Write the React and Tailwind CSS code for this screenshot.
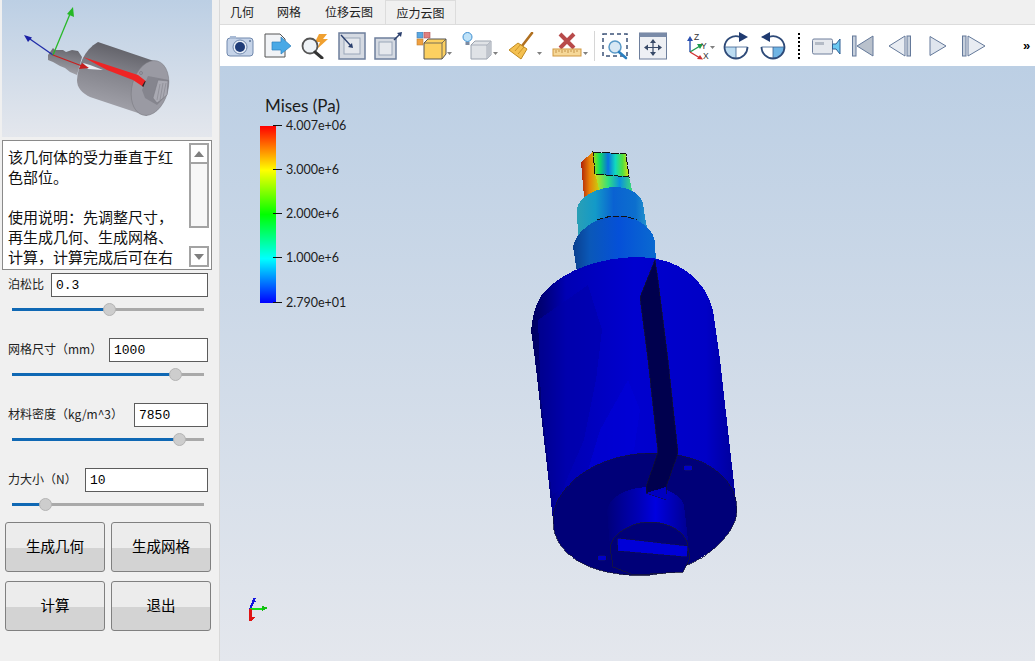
import React from "react";

const cjk = "font-['Noto_Sans_CJK_SC','Noto_Sans',sans-serif]";

const Slider = ({ value }) => (
  <div className="flex items-center ml-[12px] w-[192px] h-[14px]">
    <div className="h-[3px] bg-[#0f68b4]" style={{ width: value }} />
    <div className="w-[13px] h-[13px] shrink-0 -mx-[6px] z-10 rounded-full bg-[#cdcdcd] border border-[#b4b4b4]" />
    <div className="h-[3px] flex-1 bg-[#a9a9a9]" />
  </div>
);

const FormRow = ({ label, value, inputClass, sliderValue, className }) => (
  <div className={className}>
    <div className="flex items-center h-[24px] pl-[8px] pr-[11px]">
      <span className="text-[12px] text-[#222] flex-1 whitespace-nowrap pb-[2px]">{label}</span>
      <input
        readOnly
        value={value}
        className={`h-[24px] border border-[#5c5c5c] bg-white pl-[4px] text-[13px] text-black outline-none font-['Liberation_Mono',monospace] ${inputClass}`}
      />
    </div>
    <div className="mt-[5px]">
      <Slider value={sliderValue} />
    </div>
  </div>
);

const PanelButton = ({ children }) => (
  <button className="w-[100px] h-[50px] pb-[3px] rounded-[3px] border border-[#808080] bg-[linear-gradient(to_bottom,#ececec_0%,#ececec_52%,#d3d3d3_52%,#d3d3d3_100%)] text-[14.5px] text-black">
    {children}
  </button>
);

const ScrollButton = ({ up }) => (
  <div className="h-[21px] border-2 border-[#a3a3a3] bg-white flex items-center justify-center">
    <svg width="10" height="6" viewBox="0 0 10 6">
      <path d={up ? "M0 6 L5 0 L10 6 Z" : "M0 0 L10 0 L5 6 Z"} fill="#7f7f7f" />
    </svg>
  </div>
);

const Preview = () => (
  <svg viewBox="2 0 210 137" className="w-[210px] h-[137px] block">
    <defs>
      <linearGradient id="pvBody" x1="0.62" y1="0" x2="0.38" y2="1">
        <stop offset="0" stopColor="#5a5a61" />
        <stop offset="0.45" stopColor="#85858d" />
        <stop offset="1" stopColor="#a8a8b0" />
      </linearGradient>
      <linearGradient id="pvStep" x1="0.6" y1="0" x2="0.4" y2="1">
        <stop offset="0" stopColor="#66666d" />
        <stop offset="1" stopColor="#a4a4ac" />
      </linearGradient>
    </defs>
    <path d="M48 55 L53 48 L55 50 L63 50 L66 52 L72 50 L78 51 L82 57 L77 75 L70 72 L65 68 L60 66 L53 62 L48 60 Z" fill="url(#pvStep)" />
    <path d="M77 80 C78 66 84 50 98 42 L157 62 L147 116 L90 97 C82 93 77 88 77 80 Z" fill="url(#pvBody)" />
    <ellipse cx="150" cy="88" rx="18" ry="28" transform="rotate(15 150 88)" fill="#9a9aa3" stroke="#77777f" strokeWidth="0.5" />
    <path d="M83 63 L90 65 L103 70 L88 69 Z" fill="#e8edf4" />
    <path d="M83 57 L138 75 L147 82 L145 88 L133 80 L107 70 Z" fill="#ee2424" />
    <path d="M145 81 L147 82 L145 88 L142 86 Z" fill="#222" />
    <path d="M148 76 L169 80 L167 95 L157 105 L145 98 L142 90 Z" fill="#85858e" />
    <path d="M158 80 L168 81 L167 95 L157 103 L153 98 Z" fill="#a9a9b2" stroke="#77777f" strokeWidth="0.5" />
    <path d="M160 84 L157 100 M163 83 L160 100 M166 83 L163 98" stroke="#83838b" strokeWidth="0.6" />
    <circle cx="141" cy="73" r="1.5" fill="none" stroke="#6a6a72" strokeWidth="0.5" />
    <path d="M53 55 L27 37" stroke="#202ca8" strokeWidth="1.3" />
    <path d="M24 35 L32 37.5 L28 42 Z" fill="#1a1fa5" />
    <path d="M53 55 L70 14" stroke="#28b828" strokeWidth="1.3" />
    <path d="M73 7 L74 17 L67 14 Z" fill="#25b825" />
    <path d="M53 55 L82 66" stroke="#c81e1e" strokeWidth="1.3" />
    <path d="M89 68 L79 69 L82 63 Z" fill="#c81e1e" />
  </svg>
);

const Model = () => (
  <svg viewBox="220 66 815 595" shapeRendering="crispEdges" className="absolute inset-0 w-full h-full">
    <defs>
      <linearGradient id="bodyG" x1="0" y1="0" x2="1" y2="0">
        <stop offset="0" stopColor="#00005c" />
        <stop offset="0.07" stopColor="#00007e" />
        <stop offset="0.17" stopColor="#0000b4" />
        <stop offset="0.5" stopColor="#0000cf" />
        <stop offset="0.85" stopColor="#0000c6" />
        <stop offset="1" stopColor="#000098" />
      </linearGradient>
      <linearGradient id="cyl1" x1="0" y1="0" x2="1" y2="0">
        <stop offset="0" stopColor="#2a9fb5" />
        <stop offset="0.25" stopColor="#139ac8" />
        <stop offset="0.5" stopColor="#0a62d2" />
        <stop offset="0.8" stopColor="#0c6fce" />
        <stop offset="1" stopColor="#2a9ccb" />
      </linearGradient>
      <linearGradient id="cyl2" x1="0" y1="0" x2="1" y2="0">
        <stop offset="0" stopColor="#0a3f8e" />
        <stop offset="0.2" stopColor="#0a58b8" />
        <stop offset="0.55" stopColor="#0550d8" />
        <stop offset="1" stopColor="#0a6ad0" />
      </linearGradient>
      <linearGradient id="tipTop" x1="0" y1="0" x2="1" y2="0">
        <stop offset="0" stopColor="#9ee010" />
        <stop offset="0.18" stopColor="#10e060" />
        <stop offset="0.42" stopColor="#0a70e0" />
        <stop offset="0.62" stopColor="#10d8c0" />
        <stop offset="0.82" stopColor="#50e040" />
        <stop offset="1" stopColor="#e0e010" />
      </linearGradient>
      <linearGradient id="tipFront" x1="0" y1="0" x2="1" y2="0">
        <stop offset="0" stopColor="#d0e010" />
        <stop offset="0.35" stopColor="#30e080" />
        <stop offset="0.65" stopColor="#0a90e0" />
        <stop offset="1" stopColor="#40e070" />
      </linearGradient>
      <linearGradient id="tipLeft" x1="0" y1="0" x2="1" y2="0">
        <stop offset="0" stopColor="#b02008" />
        <stop offset="0.45" stopColor="#e88008" />
        <stop offset="1" stopColor="#c8d810" />
      </linearGradient>
      <linearGradient id="bossG" x1="0" y1="0" x2="1" y2="0">
        <stop offset="0" stopColor="#00007a" />
        <stop offset="0.4" stopColor="#0000b8" />
        <stop offset="0.6" stopColor="#0000e0" />
        <stop offset="1" stopColor="#000090" />
      </linearGradient>
    </defs>

    <path d="M581 162 L593 152 L600 190 L584 197 Z" fill="url(#tipLeft)" />
    <path d="M595 174 L629 177 L633 194 L617 189 L600 192 Z" fill="url(#tipFront)" />
    <path d="M593 152 L626 154 L629 177 L595 174 Z" fill="url(#tipTop)" stroke="#111" strokeWidth="1" strokeDasharray="8 1" />
    <path d="M577 208 C580 196 597 187 617 187 C632 188 642 196 643 204 L646 223 L650 240 L578 240 Z" fill="url(#cyl1)" />
    <path d="M573 247 C575 232 595 216 618 216 C640 217 655 230 655 244 L656 262 L577 272 Z" fill="url(#cyl2)" />
    <path d="M597 220 C605 217 612 216 618 216 C626 216 632 218 637 220" fill="none" stroke="#111" strokeWidth="1" strokeDasharray="6 2" />

    <path d="M531 330 C533 310 538 298 545 291 C565 270 600 257 640 257 C680 258 705 280 713 310 L720 360 L737 510 L553 520 L535 360 Z" fill="url(#bodyG)" />
    <path d="M588 285 L602 330 L596 380 L584 440 L563 488 L552 495 L541 400 L538 320 Z" fill="#0000a8" opacity="0.55" />
    <path d="M628 380 L640 410 L634 450 L612 465 L588 470 L600 430 Z" fill="#0000d8" opacity="0.6" />

    <path d="M553 520 C553 490 590 455 650 453 C700 452 737 475 737 510 C737 535 700 570 650 575 C600 578 553 560 553 520 Z" fill="#000078" stroke="#10103c" strokeWidth="0.8" />

    <path d="M607 510 C610 495 630 487 650 487 C668 487 682 497 684 505 L688 540 L610 547 Z" fill="url(#bossG)" />
    <path d="M610 547 C612 535 630 522 650 522 C672 522 688 535 688 548 L690 558 L683 572 L633 575 L613 567 Z" fill="#000078" stroke="#181838" strokeWidth="0.8" />
    <path d="M617 538 L688 546 L687 557 L618 551 Z" fill="#0000d8" stroke="#10103c" strokeWidth="0.6" />

    <path d="M655 260 L640 297 L648 360 L658 452 L646 487 L646 493 L667 500 L666 487 L678 453 L668 360 L658 280 Z" fill="#00004e" stroke="#12122c" strokeWidth="0.7" />
    <path d="M646 493 L666 487 L667 500 Z" fill="#0000c0" />

    <ellipse cx="688" cy="468" rx="4.5" ry="3" fill="#0000c8" stroke="#10103c" strokeWidth="0.6" />
    <ellipse cx="602" cy="558" rx="4.5" ry="3" fill="#0000c8" stroke="#10103c" strokeWidth="0.6" />

    {/* mini axes */}
    <path d="M250 609 L255 598" stroke="#1414e0" strokeWidth="2" />
    <path d="M250 609 L265 609" stroke="#14e014" strokeWidth="2" />
    <path d="M250.5 609 L250.5 621" stroke="#e01414" strokeWidth="2.5" />
    <path d="M254 597 L256 602 L252 601 Z" fill="#1414e0" />
    <path d="M262 606 L268 608 L262 611 Z" fill="#10c010" />
    <path d="M249 618 L255 617 L251 622 Z" fill="#e01414" />
  </svg>
);

const arrowDown = (x) => <path d={`M${x} 20 h5 l-2.5 3 Z`} fill="#808080" />;

const Toolbar = () => (
  <div className="h-[41px] bg-white flex items-center">
    {/* camera */}
    <svg width="28" height="24" viewBox="0 0 28 24" className="ml-[6px]">
      <rect x="1" y="4" width="26" height="18" rx="3" fill="#c5d3e8" stroke="#7088ad" />
      <rect x="4" y="2" width="6" height="3" fill="#a8bad4" />
      <circle cx="14" cy="13" r="7" fill="#e8eef7" stroke="#7088ad" />
      <circle cx="14" cy="13" r="5" fill="#1f3c78" />
      <circle cx="24" cy="7" r="1" fill="#5a7399" />
    </svg>
    {/* export */}
    <svg width="28" height="26" viewBox="0 0 28 26" className="ml-[10px]">
      <path d="M1 1 H16 L21 6 V24 H1 Z" fill="#f1f3f6" stroke="#555" />
      <path d="M8 9 H17 V4 L27 13 L17 21 V17 H8 Z" fill="#49a9e6" stroke="#2d7fbb" strokeWidth="0.7" />
    </svg>
    {/* magnify flash */}
    <svg width="28" height="26" viewBox="0 0 28 26" className="ml-[8px]">
      <path d="M19 1 L27 1 L23 6 L28 6 L17 16 L20 9 L15 9 Z" fill="#f0a030" />
      <circle cx="10" cy="13" r="7.5" fill="#eef2f6" stroke="#555" strokeWidth="1.8" />
      <path d="M15 19 L22 25" stroke="#333" strokeWidth="3" strokeLinecap="round" />
    </svg>
    {/* view in */}
    <svg width="28" height="28" viewBox="0 0 28 28" className="ml-[10px]">
      <rect x="1" y="1" width="26" height="26" fill="#d5dae2" stroke="#6e7f9c" strokeWidth="1.5" />
      <rect x="6" y="6" width="16" height="16" fill="#e5e8ed" stroke="#9aa6b8" />
      <path d="M3 3 L13 14" stroke="#2a3f6d" strokeWidth="1.4" />
      <path d="M15 16 L10 15 L14 11 Z" fill="#2a3f6d" />
    </svg>
    {/* view out */}
    <svg width="28" height="28" viewBox="0 0 28 28" className="ml-[8px]">
      <rect x="1" y="6" width="21" height="21" fill="#d5dae2" stroke="#6e7f9c" strokeWidth="1.5" />
      <rect x="5" y="10" width="13" height="13" fill="#e5e8ed" stroke="#9aa6b8" />
      <path d="M20 8 L26 2" stroke="#2a3f6d" strokeWidth="1.4" />
      <path d="M28 0 L27 5 L23 1 Z" fill="#2a3f6d" />
    </svg>
    {/* colored cube */}
    <svg width="36" height="28" viewBox="0 0 36 28" className="ml-[14px]">
      <rect x="1" y="0" width="6" height="6" fill="#5aa8e0" stroke="#4a7ab0" strokeWidth="0.6" />
      <rect x="8" y="0" width="6" height="6" fill="#e08080" stroke="#b05050" strokeWidth="0.6" />
      <rect x="1" y="7" width="6" height="6" fill="#f0a040" stroke="#c08030" strokeWidth="0.6" />
      <path d="M8 11 L12 7 H30 V22 L26 27 H8 Z" fill="#fcd060" stroke="#555" />
      <path d="M8 11 H26 L30 7 M26 11 V27" fill="none" stroke="#555" strokeWidth="0.8" />
      {arrowDown(31)}
    </svg>
    {/* bulb cube */}
    <svg width="36" height="28" viewBox="0 0 36 28" className="ml-[10px]">
      <circle cx="5.5" cy="5" r="4.5" fill="#bfe2f8" stroke="#3f8fd0" />
      <rect x="3.5" y="10" width="4" height="3" fill="#7c8aa0" />
      <path d="M9 13 L13 9 H29 V23 L25 27 H9 Z" fill="#dfe2e6" stroke="#9aa2ae" />
      <path d="M9 13 H25 L29 9 M25 13 V27" fill="none" stroke="#9aa2ae" strokeWidth="0.8" />
      <path d="M25 13 L29 9 V23 L25 27 Z" fill="#bfc4cc" />
      {arrowDown(31)}
    </svg>
    {/* broom */}
    <svg width="36" height="28" viewBox="0 0 36 28" className="ml-[10px]">
      <path d="M14 14 L24 1" stroke="#b07020" strokeWidth="2.6" strokeLinecap="round" />
      <path d="M10 11 L19 17 L13 27 L1 18 Z" fill="#f4c050" stroke="#c08a20" />
      <path d="M7 19 L13 12 M10 22 L16 15" stroke="#c08a20" strokeWidth="0.8" />
      {arrowDown(29)}
    </svg>
    {/* ruler x */}
    <svg width="38" height="28" viewBox="0 0 38 28" className="ml-[8px]">
      <path d="M8 2 L22 16 M22 2 L8 16" stroke="#b84a4a" strokeWidth="4" />
      <rect x="1" y="17" width="28" height="7" fill="#f6d898" stroke="#d09840" />
      <path d="M4 18 v3 M7 18 v2 M10 18 v3 M13 18 v2 M16 18 v3 M19 18 v2 M22 18 v3 M25 18 v2" stroke="#b07a28" strokeWidth="0.7" />
      {arrowDown(31)}
    </svg>
    <div className="ml-[4px] w-px h-[30px] bg-[#d6d6d6]" />
    {/* zoom box */}
    <svg width="26" height="28" viewBox="0 0 26 28" className="ml-[7px]">
      <rect x="1" y="2" width="24" height="22" fill="none" stroke="#3d5378" strokeWidth="1.5" strokeDasharray="4 3" />
      <circle cx="13" cy="15" r="6" fill="#d8e8f4" stroke="#5a9ac8" strokeWidth="1.5" />
      <path d="M17 20 L24 26" stroke="#2a7fc0" strokeWidth="2.6" strokeLinecap="round" />
    </svg>
    {/* fit */}
    <svg width="28" height="28" viewBox="0 0 28 28" className="ml-[11px]">
      <rect x="0.5" y="1" width="27" height="26" fill="#eef0f4" stroke="#6e7f9c" />
      <rect x="0.5" y="1" width="27" height="4" fill="#7a8ba8" />
      <path d="M14 8 V23 M6 15.5 H22" stroke="#384a68" strokeWidth="1.2" />
      <path d="M14 7 L11 11 H17 Z M14 24 L11 20 H17 Z M5 15.5 L9 12.5 V18.5 Z M23 15.5 L19 12.5 V18.5 Z" fill="#384a68" />
    </svg>
    {/* axes */}
    <svg width="32" height="28" viewBox="0 0 32 28" className="ml-[17px]">
      <path d="M6 20 V8" stroke="#2a50b0" strokeWidth="1.4" />
      <path d="M6 4 L3 9 H9 Z" fill="#2a50b0" />
      <path d="M6 20 L16 14" stroke="#1c9a4a" strokeWidth="1.4" />
      <path d="M19 12 L13 12 L16 17 Z" fill="#1c9a4a" />
      <path d="M6 20 L16 26" stroke="#d03030" strokeWidth="1.4" />
      <path d="M19 27.5 L13 27 L16 23 Z" fill="#d03030" />
      <text x="10" y="8" fontSize="8.5" fill="#333" fontFamily="Liberation Sans, sans-serif">Z</text>
      <text x="17" y="17" fontSize="8.5" fill="#333" fontFamily="Liberation Sans, sans-serif">Y</text>
      <text x="19" y="27" fontSize="8.5" fill="#333" fontFamily="Liberation Sans, sans-serif">X</text>
      <path d="M26 14 h5 l-2.5 3 Z" fill="#808080" />
    </svg>
    {/* rotate cw */}
    <svg width="26" height="28" viewBox="0 0 26 28" className="ml-[7px]">
      <path d="M1.5 15 H13 V26.5 A11.5 11.5 0 0 1 1.5 15 Z" fill="#bcdcf2" />
      <path d="M1.5 15 H24.5 M13 15 V26" stroke="#3a5f8f" strokeWidth="0.8" />
      <path d="M17 5 A11.5 11.5 0 0 0 1.5 15 A11.5 11.5 0 0 0 24.5 15" fill="none" stroke="#2e4a78" strokeWidth="1.8" />
      <path d="M16 0 L25 5 L16 10 Z" fill="#1f3a70" />
    </svg>
    {/* rotate ccw */}
    <svg width="26" height="28" viewBox="0 0 26 28" className="ml-[11px]">
      <path d="M24.5 15 A11.5 11.5 0 0 1 13 26.5 V15 Z" fill="#6fb4e4" />
      <path d="M1.5 15 H24.5 M13 15 V26" stroke="#3a5f8f" strokeWidth="0.8" />
      <path d="M9 5 A11.5 11.5 0 0 1 24.5 15 A11.5 11.5 0 0 1 1.5 15" fill="none" stroke="#2e4a78" strokeWidth="1.8" />
      <path d="M10 0 L1 5 L10 10 Z" fill="#1f3a70" />
    </svg>
    <div className="ml-[12px] h-[26px] border-l-2 border-dotted border-black" />
    {/* video camera */}
    <svg width="29" height="20" viewBox="0 0 29 20" className="ml-[12px]">
      <rect x="0.5" y="3" width="20" height="15" rx="1.5" fill="#e6e9ee" stroke="#6e7f9c" />
      <rect x="3" y="6" width="9" height="3" fill="#b4bbc6" />
      <path d="M20.5 8 L24 8 L28 3 V18 L24 13 H20.5 Z" fill="#6cc8f0" stroke="#2f5f94" />
    </svg>
    {/* first */}
    <svg width="22" height="22" viewBox="0 0 22 22" className="ml-[11px]">
      <rect x="0.5" y="1" width="3.5" height="20" fill="#c7d0dc" stroke="#64799a" />
      <path d="M21 1 V21 L5 11 Z" fill="#b9c1cc" stroke="#64799a" />
    </svg>
    {/* prev */}
    <svg width="23" height="22" viewBox="0 0 23 22" className="ml-[14px]">
      <path d="M17 1 V21 L1 11 Z" fill="#e8ecf2" stroke="#64799a" />
      <rect x="19" y="1" width="3.5" height="20" fill="#c7d0dc" stroke="#64799a" />
    </svg>
    {/* play */}
    <svg width="18" height="22" viewBox="0 0 18 22" className="ml-[18px]">
      <path d="M1 1.5 V20.5 L17 11 Z" fill="#dfe5ee" stroke="#64799a" />
    </svg>
    {/* next */}
    <svg width="24" height="22" viewBox="0 0 24 22" className="ml-[15px]">
      <rect x="0.5" y="1" width="3.5" height="20" fill="#c7d0dc" stroke="#64799a" />
      <path d="M6 1 V21 L23 11 Z" fill="#e8ecf2" stroke="#64799a" />
    </svg>
    <span className="ml-[37px] w-[8px] text-[13px] leading-none font-bold text-black font-['Liberation_Sans',sans-serif]">»</span>
  </div>
);

const ticks = ["4.007e+06", "3.000e+6", "2.000e+6", "1.000e+6", "2.790e+01"];

const Legend = () => (
  <div className="absolute left-[40px] top-[29px] text-[#1c1c1c] font-['Lato',sans-serif]">
    <div className="ml-[5px] h-[22px] text-[17px] leading-[22px] whitespace-nowrap">Mises (Pa)</div>
    <div className="flex mt-[9px]">
      <div className="w-[16px] h-[177px] bg-[linear-gradient(to_top,#0000ff,#00ffff_25%,#00ff00_50%,#ffff00_75%,#ff0000)]" />
      <div className="h-[177px] -ml-[3px] flex flex-col justify-between -my-[1px]">
        {ticks.map((t) => (
          <div key={t} className="h-0 flex items-center">
            <div className="w-[9px] h-px bg-[#111]" />
            <span className="ml-[4px] mt-[2px] text-[12.5px] whitespace-nowrap">{t}</span>
          </div>
        ))}
      </div>
    </div>
  </div>
);

const App = () => {
  return (
    <div className={`w-[1035px] h-[661px] overflow-hidden flex bg-[#f0f0f0] text-black ${cjk}`}>
      <div className="w-[220px] h-full shrink-0 border-r border-[#d9d9d9] bg-[#f0f0f0]">
        <div className="ml-[2px]">
          <div className="w-[210px] h-[137px] bg-[linear-gradient(to_bottom,#bccfe4,#e4e7ed)]">
            <Preview />
          </div>
        </div>
        <div className="ml-[2px] mt-[3px] w-[210px] h-[130px] border border-[#8a8a8a] bg-white flex">
          <div className="flex-1 pl-[5px] pt-[6px] text-[15px] leading-[20px] text-[#111] whitespace-nowrap overflow-hidden">
            该几何体的受力垂直于红
            <br />
            色部位。
            <br />
            <br />
            {"使用说明\uFF1A先调整尺寸\uFF0C"}
            <br />
            再生成几何、生成网格、
            <br />
            {"计算\uFF0C计算完成后可在右"}
          </div>
          <div className="w-[20px] mr-[2px] my-[2px] flex flex-col">
            <ScrollButton up />
            <div className="h-[64px] bg-[#f7f7f7] border-2 border-t-0 border-[#a3a3a3]" />
            <div className="flex-1" />
            <ScrollButton />
          </div>
        </div>

        <FormRow className="mt-[3px]" label="泊松比" value="0.3" inputClass="w-[157px]" sliderValue={97} />
        <FormRow className="mt-[22px]" label={"网格尺寸\uFF08mm\uFF09"} value="1000" inputClass="w-[99px]" sliderValue={163} />
        <FormRow className="mt-[22px]" label={"材料密度\uFF08kg/m^3\uFF09"} value="7850" inputClass="w-[74px]" sliderValue={167} />
        <FormRow className="mt-[22px]" label={"力大小\uFF08N\uFF09"} value="10" inputClass="w-[123px]" sliderValue={33} />

        <div className="mt-[11px] ml-[5px] grid grid-cols-[100px_100px] gap-x-[6px] gap-y-[9px]">
          <PanelButton>生成几何</PanelButton>
          <PanelButton>生成网格</PanelButton>
          <PanelButton>计算</PanelButton>
          <PanelButton>退出</PanelButton>
        </div>
      </div>

      <div className="flex-1 flex flex-col min-w-0">
        <div className="h-[25px] border-b border-[#dcdcdc] flex text-[12px] text-[#222] leading-[24px]">
          <span className="ml-[10px]">几何</span>
          <span className="ml-[23px]">网格</span>
          <span className="ml-[24px]">位移云图</span>
          <span className="ml-[12px] w-[71px] h-[25px] border border-b-0 border-[#dcdcdc] text-center">应力云图</span>
        </div>
        <Toolbar />
        <div className="relative flex-1 bg-[linear-gradient(to_bottom,#bccfe4,#e4e7ed)]">
          <Model />
          <Legend />
        </div>
      </div>
    </div>
  );
};

export default App;
